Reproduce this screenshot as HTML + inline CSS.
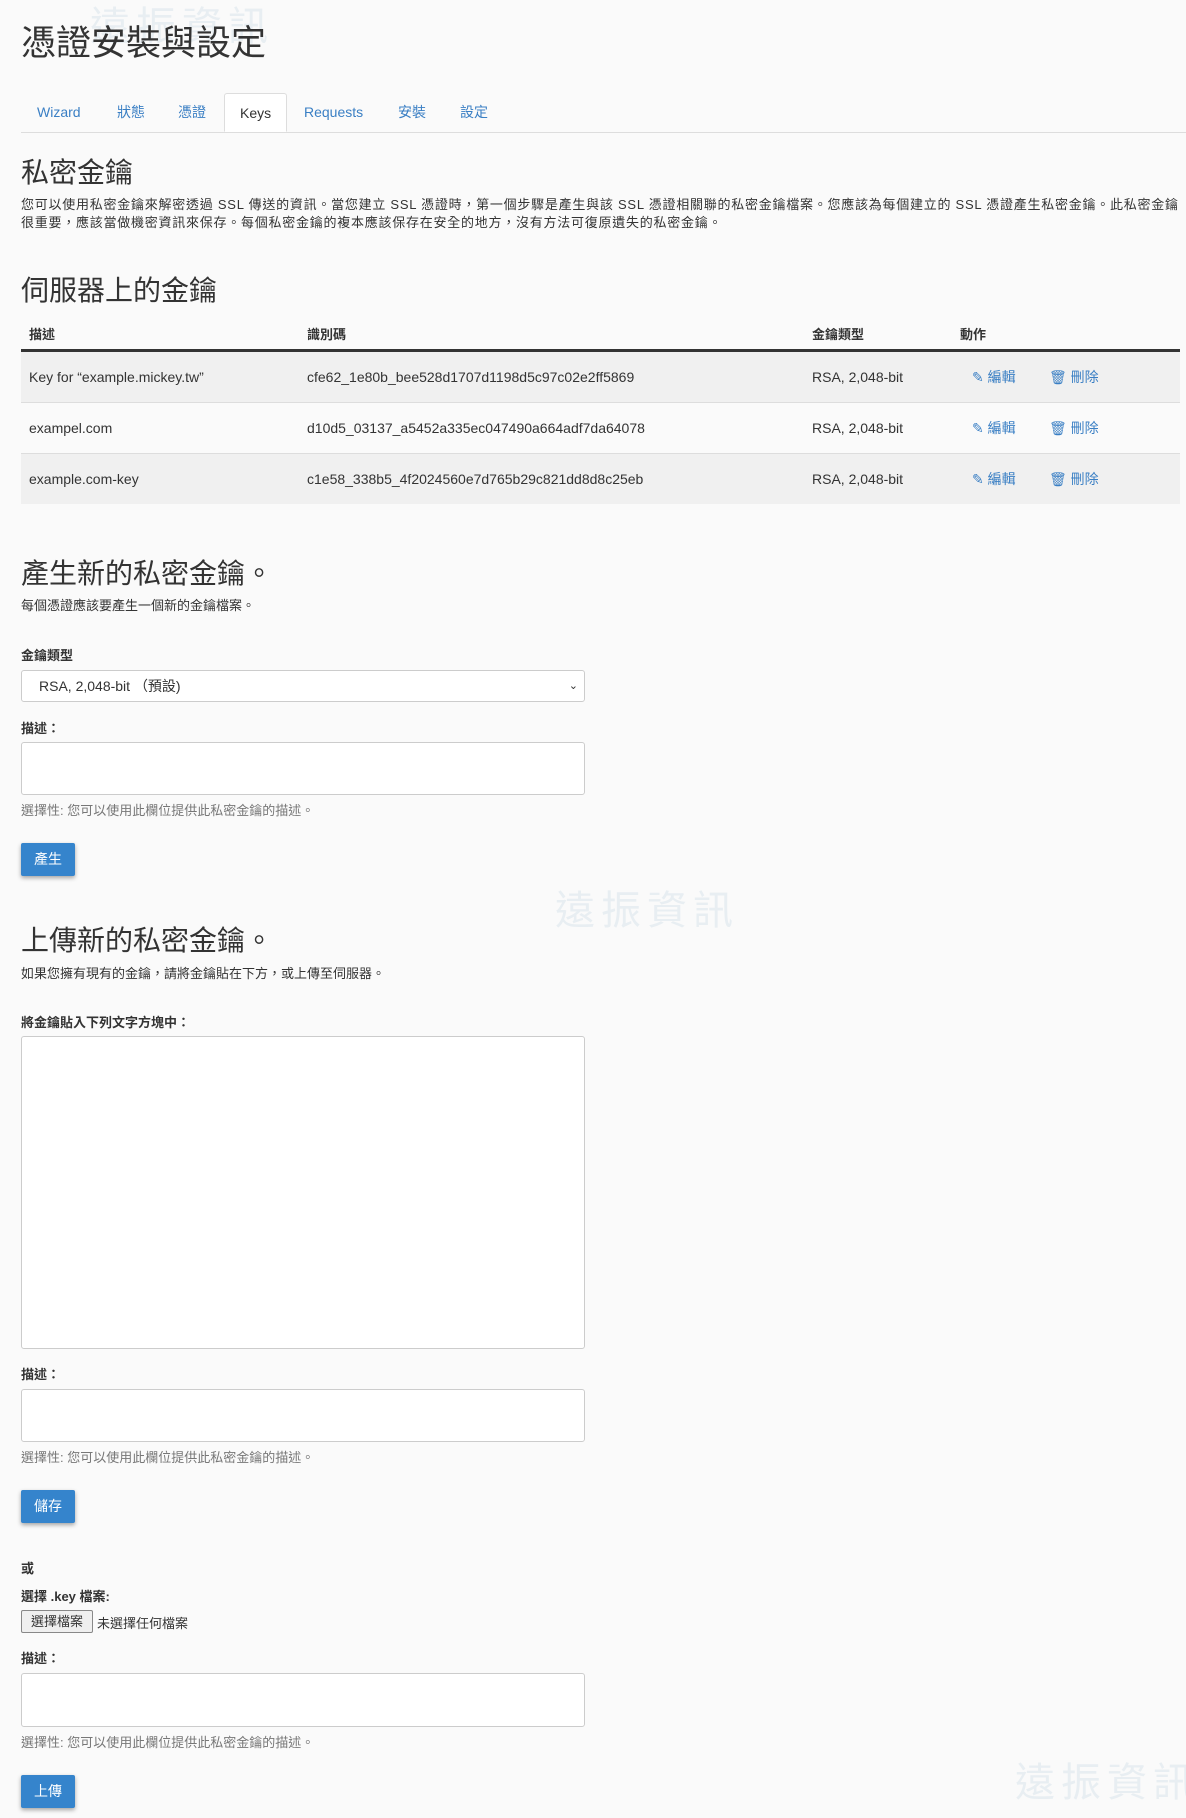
<!DOCTYPE html><html><head><meta charset="utf-8"><style>
body{margin:0;width:1186px;height:1818px;background:#fafafa;font-family:"Liberation Sans","Noto Sans CJK TC",sans-serif;color:#333;position:relative;overflow:hidden}
.a{position:absolute;white-space:nowrap}
h1,h2{margin:0;font-weight:normal}
.tabs{left:21px;top:93px;width:1165px;height:39px;border-bottom:1px solid #ddd}
.tab{position:absolute;top:0;height:39px;line-height:38px;font-size:14px;color:#3a7fc4}
.tab.on{border:1px solid #ddd;border-bottom:1px solid #fff;background:#fff;border-radius:3px 3px 0 0;color:#333;padding:0 15px;height:39px;box-sizing:border-box}
.p{font-size:13px;color:#333;line-height:18px}
.row{position:absolute;left:21px;width:1159px;height:50px;line-height:50px;font-size:14px;color:#333;border-bottom:1px solid #ddd}
.row span{position:absolute}
.lnk{color:#3a7fc4}
.box{position:absolute;left:21px;width:564px;background:#fff;border:1px solid #ccc;border-radius:3px;box-sizing:border-box}
.lbl{font-size:13px;font-weight:bold;color:#333}
.help{font-size:13px;color:#777}
.btn{position:absolute;left:21px;width:54px;height:33px;background:#3584cc;color:#fff;font-size:14px;text-align:center;line-height:33px;border-radius:2px;box-shadow:0 2px 4px rgba(0,0,0,.35)}
.wm{color:#e8eef2;font-size:40px;letter-spacing:6px}
</style></head><body>
<div class="a wm" style="left:90px;top:-6px;">遠振資訊</div>
<div class="a wm" style="left:555px;top:878px;">遠振資訊</div>
<div class="a wm" style="left:1015px;top:1750px;">遠振資訊</div>
<h1 class="a" style="left:21px;top:15px;font-size:35px;color:#333">憑證安裝與設定</h1>
<div class="a tabs">
<div class="tab" style="left:16px">Wizard</div>
<div class="tab" style="left:96px">狀態</div>
<div class="tab" style="left:157px">憑證</div>
<div class="tab on" style="left:203px">Keys</div>
<div class="tab" style="left:283px">Requests</div>
<div class="tab" style="left:377px">安裝</div>
<div class="tab" style="left:439px">設定</div>
</div>
<h2 class="a" style="left:21px;top:151px;font-size:28px">私密金鑰</h2>
<div class="a p" style="left:21px;top:196px;font-size:13px;letter-spacing:0.75px">您可以使用私密金鑰來解密透過 SSL 傳送的資訊。當您建立 SSL 憑證時，第一個步驟是產生與該 SSL 憑證相關聯的私密金鑰檔案。您應該為每個建立的 SSL 憑證產生私密金鑰。此私密金鑰<br>很重要，應該當做機密資訊來保存。每個私密金鑰的複本應該保存在安全的地方，沒有方法可復原遺失的私密金鑰。</div>
<h2 class="a" style="left:21px;top:269px;font-size:28px">伺服器上的金鑰</h2>
<div class="a lbl" style="left:29px;top:324px">描述</div>
<div class="a lbl" style="left:307px;top:324px">識別碼</div>
<div class="a lbl" style="left:812px;top:324px">金鑰類型</div>
<div class="a lbl" style="left:960px;top:324px">動作</div>
<div class="a" style="left:21px;top:349px;width:1159px;height:3px;background:#333"></div>
<div class="row" style="top:352px;background:#f0f0f0"><span style="left:8px">Key for “example.mickey.tw”</span><span style="left:286px">cfe62_1e80b_bee528d1707d1198d5c97c02e2ff5869</span><span style="left:791px">RSA, 2,048-bit</span><span class="lnk" style="left:951px">✎ 編輯</span><span class="lnk" style="left:1028px">🗑 刪除</span></div>
<div class="row" style="top:403px"><span style="left:8px">exampel.com</span><span style="left:286px">d10d5_03137_a5452a335ec047490a664adf7da64078</span><span style="left:791px">RSA, 2,048-bit</span><span class="lnk" style="left:951px">✎ 編輯</span><span class="lnk" style="left:1028px">🗑 刪除</span></div>
<div class="row" style="top:454px;background:#f0f0f0;border-bottom:none"><span style="left:8px">example.com-key</span><span style="left:286px">c1e58_338b5_4f2024560e7d765b29c821dd8d8c25eb</span><span style="left:791px">RSA, 2,048-bit</span><span class="lnk" style="left:951px">✎ 編輯</span><span class="lnk" style="left:1028px">🗑 刪除</span></div>
<h2 class="a" style="left:21px;top:552px;font-size:28px">產生新的私密金鑰。</h2>
<div class="a p" style="left:21px;top:597px">每個憑證應該要產生一個新的金鑰檔案。</div>
<div class="a lbl" style="left:21px;top:645px">金鑰類型</div>
<div class="box" style="top:670px;height:32px;font-size:14px;line-height:30px;padding-left:17px">RSA, 2,048-bit （預設)<span style="position:absolute;right:6px;font-size:11px">⌄</span></div>
<div class="a lbl" style="left:21px;top:718px">描述：</div>
<div class="box" style="top:742px;height:53px"></div>
<div class="a help" style="left:21px;top:800px">選擇性: 您可以使用此欄位提供此私密金鑰的描述。</div>
<div class="btn" style="top:843px">產生</div>
<h2 class="a" style="left:21px;top:919px;font-size:28px">上傳新的私密金鑰。</h2>
<div class="a p" style="left:21px;top:965px">如果您擁有現有的金鑰，請將金鑰貼在下方，或上傳至伺服器。</div>
<div class="a lbl" style="left:21px;top:1012px">將金鑰貼入下列文字方塊中：</div>
<div class="box" style="top:1036px;height:313px"></div>
<div class="a lbl" style="left:21px;top:1364px">描述：</div>
<div class="box" style="top:1389px;height:53px"></div>
<div class="a help" style="left:21px;top:1447px">選擇性: 您可以使用此欄位提供此私密金鑰的描述。</div>
<div class="btn" style="top:1490px">儲存</div>
<div class="a lbl" style="left:21px;top:1558px">或</div>
<div class="a lbl" style="left:21px;top:1586px">選擇 .key 檔案:</div>
<div class="a" style="left:21px;top:1610px;width:72px;height:23px;border:1px solid #888;border-radius:2px;background:#efefef;box-sizing:border-box;font-size:13px;text-align:center;line-height:21px">選擇檔案</div>
<div class="a" style="left:97px;top:1613px;font-size:13px">未選擇任何檔案</div>
<div class="a lbl" style="left:21px;top:1648px">描述：</div>
<div class="box" style="top:1673px;height:54px"></div>
<div class="a help" style="left:21px;top:1732px">選擇性: 您可以使用此欄位提供此私密金鑰的描述。</div>
<div class="btn" style="top:1775px">上傳</div>
</body></html>
